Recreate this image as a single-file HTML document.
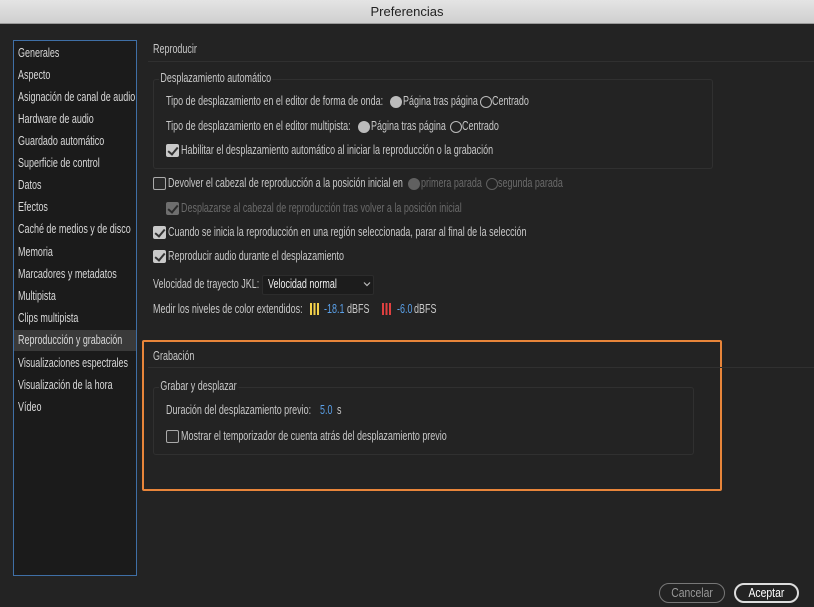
<!DOCTYPE html>
<html><head><meta charset="utf-8"><style>
*{margin:0;padding:0;box-sizing:border-box}
body{width:814px;height:607px;background:#232323;position:relative;overflow:hidden;font-family:"Liberation Sans",sans-serif;font-size:13px;color:#c8c8c8}
.a{position:absolute;white-space:nowrap;line-height:14px;transform:scaleX(.69);transform-origin:0 0}
.title{position:absolute;left:0;top:0;width:814px;height:24px;background:linear-gradient(#e4e4e4,#cfcfcf);border-bottom:1px solid #9a9a9a;text-align:center;color:#222;font-size:13px;line-height:24px}
.side{position:absolute;left:13px;top:40px;width:124px;height:536px;background:#1b1b1b;border:1px solid #3f6fa6}
.side div{position:absolute;left:4px;white-space:nowrap;color:#d8d8d8;transform:scaleX(.69);transform-origin:0 0}
.sel{position:absolute;top:289px;left:0;width:122px;height:21px;background:#3a3a3a}
.cb{position:absolute;width:13px;height:13px;border:1px solid #aaa;border-radius:2px;background:#2a2a2a}
.cb.on{background:#c9c9c9;border-color:#c9c9c9}
.cb.on::after{content:"";position:absolute;left:3px;top:0px;width:4px;height:8px;border:solid #333;border-width:0 2px 2px 0;transform:rotate(40deg)}
.cb.dis{opacity:.45}
.rd{position:absolute;width:12px;height:12px;border-radius:50%;border:1.5px solid #bbb}
.rd.on{background:#bbb}
.grp{position:absolute;border:1px solid #303030;border-radius:3px}
.dim{color:#6a6a6a}
.blue{color:#5aa0e8}
.btn{position:absolute;height:20px;border-radius:10px;text-align:center}
.btn span{display:inline-block;transform:scaleX(.8)}
</style></head><body>
<div class="title">Preferencias</div>
<div class="side">
<span class="sel"></span>
<div style="top:4px">Generales</div>
<div style="top:26px">Aspecto</div>
<div style="top:48px">Asignación de canal de audio</div>
<div style="top:70px">Hardware de audio</div>
<div style="top:92px">Guardado automático</div>
<div style="top:114px">Superficie de control</div>
<div style="top:136px">Datos</div>
<div style="top:158px">Efectos</div>
<div style="top:180px">Caché de medios y de disco</div>
<div style="top:203px">Memoria</div>
<div style="top:225px">Marcadores y metadatos</div>
<div style="top:247px">Multipista</div>
<div style="top:269px">Clips multipista</div>
<div style="top:291px">Reproducción y grabación</div>
<div style="top:314px">Visualizaciones espectrales</div>
<div style="top:336px">Visualización de la hora</div>
<div style="top:358px">Vídeo</div>
</div>

<div class="a" style="left:153px;top:42px">Reproducir</div>
<div style="position:absolute;left:148px;top:61px;width:666px;border-top:1px solid #303030"></div>
<div class="grp" style="left:153px;top:79px;width:560px;height:90px"></div>
<div class="a" style="left:159px;top:71px;background:#232323;padding:0 2px">Desplazamiento automático</div>
<div class="a" style="left:166px;top:94px">Tipo de desplazamiento en el editor de forma de onda:</div>
<div class="rd on" style="left:390px;top:96px"></div><div class="a" style="left:403px;top:94px">Página tras página</div>
<div class="rd" style="left:480px;top:96px"></div><div class="a" style="left:492px;top:94px">Centrado</div>
<div class="a" style="left:166px;top:119px">Tipo de desplazamiento en el editor multipista:</div>
<div class="rd on" style="left:358px;top:121px"></div><div class="a" style="left:371px;top:119px">Página tras página</div>
<div class="rd" style="left:450px;top:121px"></div><div class="a" style="left:462px;top:119px">Centrado</div>
<div class="cb on" style="left:166px;top:144px"></div><div class="a" style="left:181px;top:143px">Habilitar el desplazamiento automático al iniciar la reproducción o la grabación</div>

<div class="cb" style="left:153px;top:177px"></div><div class="a" style="left:168px;top:176px">Devolver el cabezal de reproducción a la posición inicial en</div>
<div class="rd on" style="left:408px;top:178px;opacity:.4"></div><div class="a dim" style="left:421px;top:176px">primera parada</div>
<div class="rd" style="left:486px;top:178px;opacity:.4"></div><div class="a dim" style="left:498px;top:176px">segunda parada</div>
<div class="cb on dis" style="left:166px;top:202px"></div><div class="a dim" style="left:181px;top:201px">Desplazarse al cabezal de reproducción tras volver a la posición inicial</div>
<div class="cb on" style="left:153px;top:226px"></div><div class="a" style="left:168px;top:225px">Cuando se inicia la reproducción en una región seleccionada, parar al final de la selección</div>
<div class="cb on" style="left:153px;top:250px"></div><div class="a" style="left:168px;top:249px">Reproducir audio durante el desplazamiento</div>
<div class="a" style="left:153px;top:277px">Velocidad de trayecto JKL:</div>
<div style="position:absolute;left:262px;top:275px;width:112px;height:20px;background:#1c1c1c;border:1px solid #2c2c2c;border-radius:2px"></div>
<div class="a" style="left:268px;top:277px;color:#eee">Velocidad normal</div>
<svg style="position:absolute;left:363px;top:281px" width="8" height="6"><path d="M1 1.5L4 4.5L7 1.5" stroke="#bbb" fill="none" stroke-width="1.2"/></svg>
<div class="a" style="left:153px;top:302px">Medir los niveles de color extendidos:</div>
<div style="position:absolute;left:310px;top:303px;width:9px;height:12px;background:repeating-linear-gradient(90deg,#f2d04a 0 2px,#222 2px 3.5px)"></div>
<div class="a blue" style="left:324px;top:302px">-18.1</div><div class="a" style="left:347px;top:302px">dBFS</div>
<div style="position:absolute;left:382px;top:303px;width:9px;height:12px;background:repeating-linear-gradient(90deg,#e04040 0 2px,#222 2px 3.5px)"></div>
<div class="a blue" style="left:397px;top:302px">-6.0</div><div class="a" style="left:414px;top:302px">dBFS</div>

<div style="position:absolute;left:142px;top:340px;width:580px;height:151px;border:2px solid #e8853a;border-radius:2px"></div>
<div class="a" style="left:153px;top:349px">Grabación</div>
<div style="position:absolute;left:148px;top:367px;width:666px;border-top:1px solid #303030"></div>
<div class="grp" style="left:153px;top:387px;width:541px;height:68px"></div>
<div class="a" style="left:159px;top:379px;background:#232323;padding:0 2px">Grabar y desplazar</div>
<div class="a" style="left:166px;top:403px">Duración del desplazamiento previo:</div>
<div class="a blue" style="left:320px;top:403px">5.0</div><div class="a" style="left:337px;top:403px">s</div>
<div class="cb" style="left:166px;top:430px"></div><div class="a" style="left:181px;top:429px">Mostrar el temporizador de cuenta atrás del desplazamiento previo</div>

<div class="btn" style="left:659px;top:583px;width:66px;border:1px solid #777;color:#999;line-height:18px"><span>Cancelar</span></div>
<div class="btn" style="left:734px;top:583px;width:65px;border:2px solid #ddd;color:#fff;line-height:16px"><span>Aceptar</span></div>
</body></html>
